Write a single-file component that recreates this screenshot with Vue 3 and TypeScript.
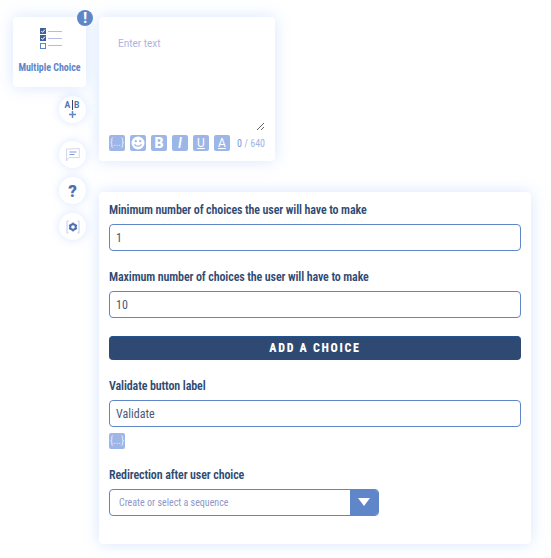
<script setup lang="ts">
import { ref } from 'vue';

const minChoices = ref('1');
const maxChoices = ref('10');
const validateLabel = ref('Validate');
const text = ref('');
</script>
<template>
  <div class="page">
    <div class="side">
      <div class="tile">
        <span class="badge">!</span>
        <svg class="tile-icon" width="22" height="21" viewBox="0 0 22 21" fill="none">
          <rect x="0.5" y="0.5" width="5" height="5" fill="#3f5f9a" stroke="#3f5f9a" />
          <rect x="0.5" y="7.5" width="5" height="5" fill="#3f5f9a" stroke="#3f5f9a" />
          <rect x="0.5" y="15.5" width="5" height="5" stroke="#5f86c9" />
          <path d="M1.3 3l1.3 1.4L5 1.5M1.3 10l1.3 1.4L5 8.5" stroke="#fff" />
          <path d="M8 3.5h14M8 10.5h14M8 17.5h14" stroke="#b3bce8" />
        </svg>
        <div class="tile-label">Multiple Choice</div>
      </div>

      <button class="round ab">
        <svg width="19" height="19" viewBox="0 0 19 19">
          <text x="1.5" y="8" class="ab-text">A</text>
          <text x="11" y="8" class="ab-text">B</text>
          <path d="M9.5 0v10" stroke="#2f4a72" />
          <path d="M9.5 11v7M6 14.5h7" stroke="#5f86c9" stroke-width="1.5" />
        </svg>
      </button>
      <button class="round comment">
        <svg width="14" height="14" viewBox="0 0 14 14" fill="none">
          <path d="M.5 1.2l12.8-.7v9H3L.5 13z" stroke="#d3d7f0" />
          <path d="M3.5 4h7M3.5 6.5h5" stroke="#7d9bd3" />
        </svg>
      </button>
      <button class="round help">?</button>
      <button class="round gear">
        <svg width="14" height="14" viewBox="0 0 14 14" fill="none">
          <path d="M2.5 1H1v12h1.5M11.5 1H13v12h-1.5" stroke="#c5cbea" />
          <circle cx="7" cy="7" r="2.8" stroke="#4f71ad" stroke-width="2" />
          <path d="M7 2.5v1.5M7 10v1.5M3 5l1.3.8M9.7 8.2L11 9M3 9l1.3-.8M9.7 5.8L11 5" stroke="#4f71ad" stroke-width="1.4" />
        </svg>
      </button>
    </div>

    <div class="content">
      <div class="editor">
        <textarea v-model="text" class="editor-input" placeholder="Enter text"></textarea>
        <div class="toolbar">
          <span class="tool vars">{...}</span>
          <span class="tool">
            <svg width="14" height="14" viewBox="0 0 14 14">
              <circle cx="7" cy="7" r="6.5" fill="#fff" />
              <circle cx="4.8" cy="5.2" r="1.1" fill="#9db6e8" />
              <circle cx="9.2" cy="5.2" r="1.1" fill="#9db6e8" />
              <path d="M3.5 8.2c1 2.6 6 2.6 7 0" stroke="#9db6e8" stroke-width="1.2" fill="none" />
            </svg>
          </span>
          <span class="tool bold">B</span>
          <span class="tool italic">I</span>
          <span class="tool under">U</span>
          <span class="tool under">A</span>
          <span class="count"><b>0</b> / 640</span>
        </div>
      </div>

      <div class="form">
        <label class="field-label">Minimum number of choices the user will have to make</label>
        <input v-model="minChoices" class="field" />
        <label class="field-label next">Maximum number of choices the user will have to make</label>
        <input v-model="maxChoices" class="field" />
        <button class="add">ADD A CHOICE</button>
        <label class="field-label next">Validate button label</label>
        <input v-model="validateLabel" class="field" />
        <span class="tool vars under-field">{...}</span>
        <label class="field-label next">Redirection after user choice</label>
        <div class="select">
          <span class="select-text">Create or select a sequence</span>
          <span class="select-arrow"></span>
        </div>
      </div>
    </div>
  </div>
</template>
<style>
body {
  background: #fff;
}
</style>
<style scoped>
.page {
  display: flex;
  gap: 13px;
  width: 551px;
  height: 558px;
  padding: 17px 0 0 13px;
  box-sizing: border-box;
  overflow: hidden;
  font-family: Roboto, "Liberation Sans", sans-serif;
  font-stretch: condensed;
  color: #2f4a72;
}
.side {
  width: 73px;
  display: flex;
  flex-direction: column;
  align-items: flex-end;
}
.tile {
  position: relative;
  width: 73px;
  height: 70px;
  background: #fff;
  border-radius: 4px;
  box-shadow: 0 0 16px rgba(110, 165, 255, 0.28);
  display: flex;
  flex-direction: column;
  align-items: center;
}
.tile-icon {
  margin: 11px 0 0 3px;
}
.tile-label {
  margin-top: 13px;
  font-size: 10px;
  line-height: 12px;
  font-weight: 700;
  letter-spacing: -0.04px;
  color: #5f86c9;
  white-space: nowrap;
}
.badge {
  position: absolute;
  top: -7px;
  right: -7px;
  width: 16px;
  height: 16px;
  border-radius: 50%;
  background: #5f86c9;
  color: #fff;
  font-size: 14px;
  font-weight: 900;
  line-height: 16px;
  text-align: center;
}
.round {
  width: 27px;
  height: 27px;
  padding: 0;
  border: 0;
  border-radius: 50%;
  background: #fff;
  box-shadow: 0 0 10px rgba(110, 165, 255, 0.28);
  display: flex;
  align-items: center;
  justify-content: center;
  margin-top: 9px;
  flex: none;
}
.round.comment {
  margin-top: 18px;
}
.ab-text {
  font: 700 8.5px Roboto, sans-serif;
  fill: #4f71ad;
}
.help {
  font-family: Roboto, sans-serif;
  font-size: 17px;
  font-weight: 900;
  color: #4f71ad;
}
.content {
  display: flex;
  flex-direction: column;
  gap: 31px;
}
.editor {
  width: 176px;
  height: 144px;
  box-sizing: border-box;
  background: #fff;
  border-radius: 4px;
  box-shadow: 0 0 16px rgba(110, 165, 255, 0.28);
  padding: 10px;
  display: flex;
  flex-direction: column;
}
.editor-input {
  flex: 1;
  border: 0;
  outline: 0;
  resize: vertical;
  padding: 11px 9px;
  font-family: inherit;
  font-size: 10px;
  color: #2f4a72;
}
.editor-input::placeholder {
  color: #a9b5e0;
}
.toolbar {
  display: flex;
  align-items: center;
  gap: 5px;
  height: 16px;
  margin-top: 4px;
}
.tool {
  width: 16px;
  height: 16px;
  border-radius: 2px;
  background: #9db6e8;
  color: #fff;
  display: flex;
  align-items: center;
  justify-content: center;
  font-size: 12px;
  font-stretch: normal;
  line-height: 1;
  flex: none;
}
.vars {
  font-size: 10px;
  font-stretch: condensed;
  color: rgba(255, 255, 255, 0.75);
}
.bold {
  font-weight: 900;
  font-size: 14px;
}
.italic {
  font-style: italic;
  font-weight: 500;
  font-size: 14px;
}
.under {
  text-decoration: underline;
  text-underline-offset: 1px;
}
.count {
  margin-left: 2px;
  font-size: 10px;
  color: #9db6e8;
  white-space: nowrap;
}
.count b {
  font-weight: 400;
  color: #6f9ed8;
}
.form {
  width: 432px;
  height: 352px;
  box-sizing: border-box;
  background: #fff;
  border-radius: 4px;
  box-shadow: 0 0 16px rgba(110, 165, 255, 0.28);
  padding: 12px 10px 0;
  display: flex;
  flex-direction: column;
  align-items: flex-start;
}
.field-label {
  font-size: 12px;
  font-weight: 600;
  line-height: 12px;
  letter-spacing: -0.11px;
  margin-bottom: 8px;
  white-space: nowrap;
}
.next {
  margin-top: 20px;
}
.field {
  width: 100%;
  height: 27px;
  box-sizing: border-box;
  border: 1px solid #5f86c9;
  border-radius: 4px;
  padding: 0 6px;
  font-family: inherit;
  font-stretch: condensed;
  font-size: 12px;
  color: #47597a;
  outline: 0;
}
.add {
  width: 100%;
  height: 24px;
  margin-top: 18px;
  padding: 0 0 1px;
  border: 0;
  border-top: 1px solid #24528f;
  border-radius: 4px;
  background: #2f4a72;
  color: #fff;
  font-family: inherit;
  font-stretch: condensed;
  font-size: 12px;
  font-weight: 800;
  letter-spacing: 1.7px;
}
.under-field {
  margin-top: 6px;
}
.select {
  width: 270px;
  height: 27px;
  box-sizing: border-box;
  border: 1px solid #5f86c9;
  border-radius: 4px;
  display: flex;
  align-items: center;
  justify-content: space-between;
  overflow: hidden;
}
.select-text {
  padding-left: 9px;
  font-size: 10px;
  color: #8d97c8;
}
.select-arrow {
  width: 28px;
  height: 100%;
  background: #5f86c9;
  position: relative;
}
.select-arrow::after {
  content: '';
  position: absolute;
  left: 8px;
  top: 8px;
  border-left: 6px solid transparent;
  border-right: 6px solid transparent;
  border-top: 8px solid #fff;
}
</style>
